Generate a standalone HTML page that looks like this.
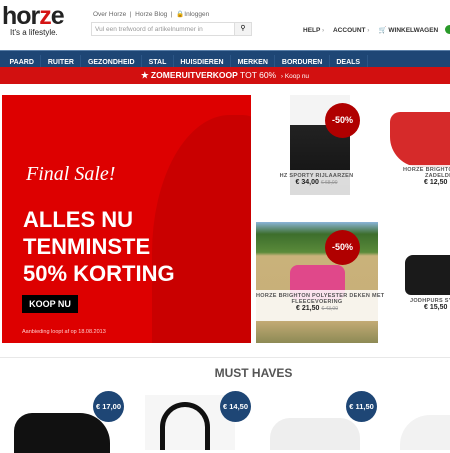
<!DOCTYPE html>
<html><head><style>
*{margin:0;padding:0;box-sizing:border-box}
body{width:450px;height:450px;overflow:hidden;background:#fff;font-family:"Liberation Sans",Arial,sans-serif;position:relative}
.a{position:absolute}
.nav span{color:#fff;font-size:7px;font-weight:bold;display:inline-block;padding:0 6.5px;line-height:16px;border-right:1px solid #2c5686}
.circ{border-radius:50%;color:#fff;font-weight:bold;text-align:center}
.lbl{font-size:5.5px;color:#555;font-weight:bold;text-align:center;letter-spacing:.3px;white-space:nowrap}
.pr{font-size:7px;font-weight:bold;color:#222;text-align:center;white-space:nowrap}
.pr s{color:#999;font-weight:normal;font-size:5px}
</style></head><body>
<div class="a" style="left:2px;top:2px;font-size:25px;font-weight:bold;color:#222;letter-spacing:-1px">hor<span style="color:#d41414">z</span>e</div>
<div class="a" style="left:10px;top:28px;font-size:8px;color:#222">It's a lifestyle.</div>
<div class="a" style="left:93px;top:10px;font-size:6.5px;color:#666">Over Horze &nbsp;|&nbsp; Horze Blog &nbsp;|&nbsp; &#128274;Inloggen</div>
<div class="a" style="left:91px;top:22px;width:161px;height:14px;border:1px solid #ddd"><div style="font-size:6.5px;color:#999;padding:3px 3px">Vul een trefwoord of artikelnummer in</div><div class="a" style="right:0;top:0;width:17px;height:12px;background:#f3f3f3;border-left:1px solid #ddd;font-size:7px;text-align:center;line-height:12px">&#9906;</div></div>
<div class="a" style="left:303px;top:26px;font-size:6.5px;font-weight:bold;color:#333">HELP <span style="color:#aaa">›</span> &nbsp;&nbsp;&nbsp; ACCOUNT <span style="color:#aaa">›</span> &nbsp;&nbsp;&nbsp; &#128722; WINKELWAGEN</div>
<div class="a circ" style="left:445px;top:25px;width:9px;height:9px;background:#2a9a2a"></div>
<div class="a nav" style="left:0;top:50px;width:450px;height:17px;background:#1e4675;border-top:1px solid #5a7fa8;padding-left:3px;white-space:nowrap"><span>PAARD</span><span>RUITER</span><span>GEZONDHEID</span><span>STAL</span><span>HUISDIEREN</span><span>MERKEN</span><span>BORDUREN</span><span>DEALS</span></div>
<div class="a" style="left:0;top:67px;width:450px;height:17px;background:#d21010;color:#fff;text-align:center;font-size:8.5px;line-height:17px;font-weight:bold">&#9733; ZOMERUITVERKOOP <span style="font-weight:normal">TOT 60%</span> &nbsp;<span style="font-size:6.5px;font-weight:normal">› Koop nu</span></div>
<div class="a" style="left:2px;top:95px;width:249px;height:248px;background:#dd0000;overflow:hidden">
<div class="a" style="left:150px;top:20px;width:130px;height:230px;background:#c40000;border-radius:60% 30% 0 0;opacity:.8"></div>
<div class="a" style="left:24px;top:68px;font-family:'Liberation Serif',serif;font-style:italic;font-size:20px;color:#fff">Final Sale!</div>
<div class="a" style="left:21px;top:111px;font-size:22px;font-weight:bold;color:#fff;line-height:27px">ALLES NU<br>TENMINSTE<br>50% KORTING</div>
<div class="a" style="left:20px;top:200px;width:56px;height:18px;background:#000;color:#fff;font-size:9px;font-weight:bold;text-align:center;line-height:18px">KOOP NU</div>
<div class="a" style="left:20px;top:234px;font-size:5.5px;color:#fcc">Aanbieding loopt af op 18.08.2013</div>
</div>
<div class="a" style="left:290px;top:95px;width:60px;height:100px;background:linear-gradient(#f4f4f4 30%,#222 30%,#111)"></div>
<div class="a" style="left:255px;top:170px;width:123px;height:26px;background:rgba(255,255,255,.85)"><div class="lbl" style="margin-top:3px">HZ SPORTY RIJLAARZEN</div><div class="pr">€ 34,00 <s>€ 68,00</s></div></div>
<div class="a circ" style="left:325px;top:103px;width:35px;height:35px;background:#b00000;font-size:9px;line-height:35px">-50%</div>
<div class="a" style="left:390px;top:112px;width:60px;height:55px;background:#d62a2a;border-radius:10px 0 0 30px"></div>
<div class="a" style="left:388px;top:165px;width:62px;height:28px;background:rgba(255,255,255,.85);overflow:hidden"><div class="lbl" style="margin-top:2px;text-align:left;padding-left:15px">HORZE BRIGHTON</div><div class="lbl" style="text-align:left;padding-left:37px">ZADELDE</div><div class="pr" style="text-align:left;padding-left:36px">€ 12,50</div></div>
<div class="a" style="left:256px;top:222px;width:122px;height:121px;background:linear-gradient(#8ab4d8 0,#3d6e2c 10%,#5a8a3a 25%,#c9b27a 28%,#c8ae78 80%,#8d8a55 100%)"></div>
<div class="a" style="left:290px;top:265px;width:55px;height:35px;background:#e0488a;border-radius:8px"></div>
<div class="a" style="left:256px;top:290px;width:122px;height:31px;background:rgba(255,255,255,.85)"><div class="lbl" style="margin-top:3px">HORZE BRIGHTON POLYESTER DEKEN MET</div><div class="lbl">FLEECEVOERING</div><div class="pr">€ 21,50 <s>€ 43,00</s></div></div>
<div class="a circ" style="left:325px;top:230px;width:35px;height:35px;background:#b00000;font-size:9px;line-height:35px">-50%</div>
<div class="a" style="left:405px;top:255px;width:45px;height:40px;background:#1a1a1a;border-radius:8px 0 0 6px"></div>
<div class="a" style="left:388px;top:295px;width:62px;height:25px;background:rgba(255,255,255,.85);overflow:hidden"><div class="lbl" style="margin-top:3px;text-align:left;padding-left:22px">JODHPURS SYN</div><div class="pr" style="text-align:left;padding-left:36px">€ 15,50</div></div>
<div class="a" style="left:0;top:357px;width:450px;height:1px;background:#e8e8e8"></div>
<div class="a" style="left:0;top:366px;width:507px;text-align:center;font-size:12px;font-weight:bold;color:#555">MUST HAVES</div>
<div class="a" style="left:14px;top:413px;width:96px;height:40px;background:#111;border-radius:18px 30px 0 0"></div>
<div class="a" style="left:145px;top:395px;width:90px;height:55px;background:#f6f6f6"></div>
<div class="a" style="left:160px;top:402px;width:50px;height:48px;border:5px solid #111;border-radius:25px 25px 0 0;border-bottom:none"></div>
<div class="a" style="left:270px;top:418px;width:90px;height:32px;background:#eee;border-radius:20px 20px 0 0"></div>
<div class="a" style="left:400px;top:415px;width:50px;height:35px;background:#f2f2f2;border-radius:30px 0 0 0"></div>
<div class="a circ" style="left:93px;top:391px;width:31px;height:31px;background:#1e4675;font-size:7.5px;line-height:31px">€ 17,00</div>
<div class="a circ" style="left:220px;top:391px;width:31px;height:31px;background:#1e4675;font-size:7.5px;line-height:31px">€ 14,50</div>
<div class="a circ" style="left:346px;top:391px;width:31px;height:31px;background:#1e4675;font-size:7.5px;line-height:31px">€ 11,50</div>
</body></html>
